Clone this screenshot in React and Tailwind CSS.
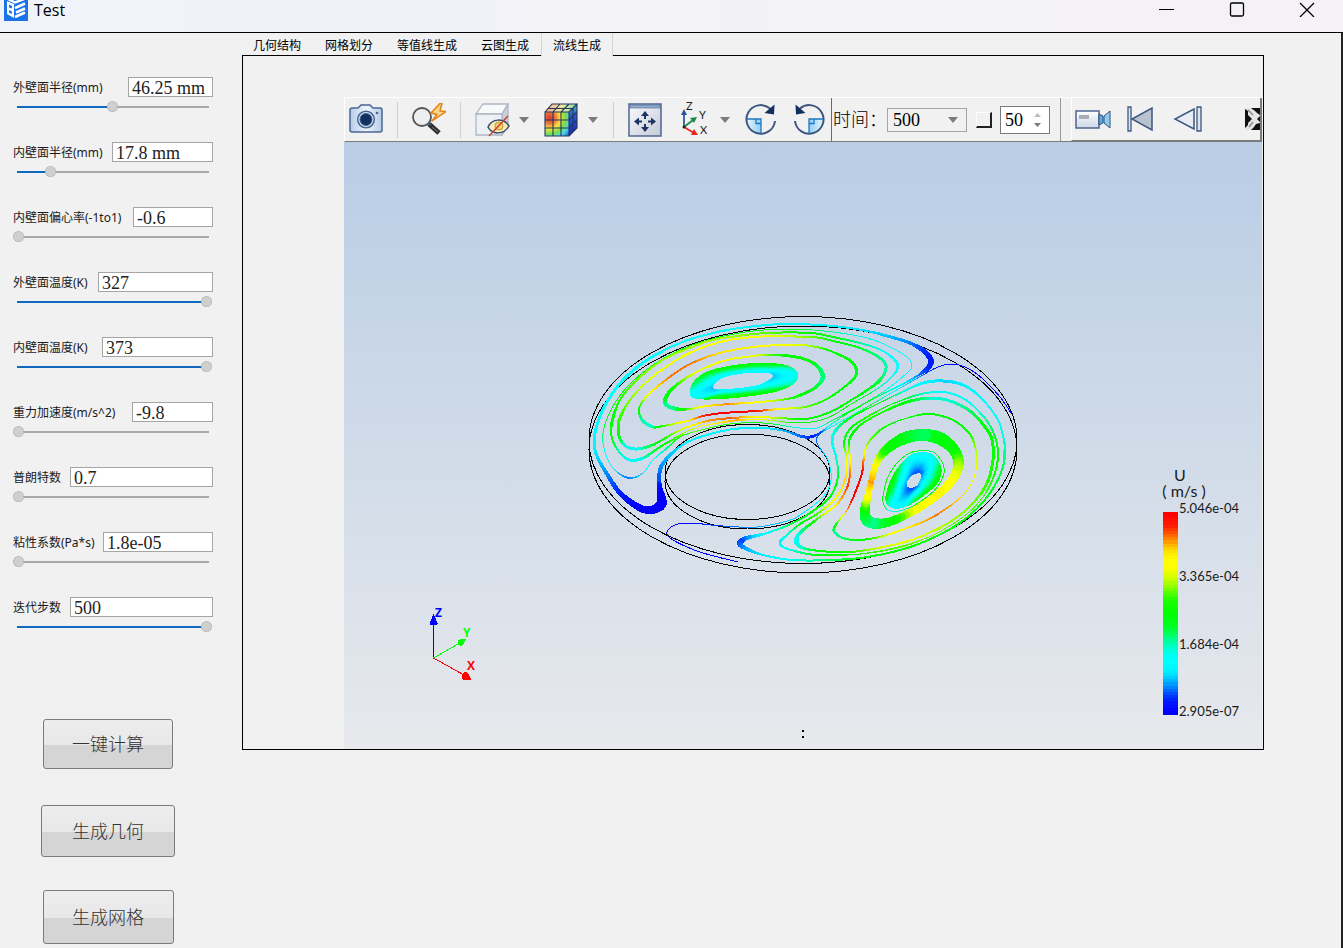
import { useState } from "react";

const fields = [
  { id: "outer-r", label: "外壁面半径(mm)", value: "46.25 mm", width: "w-[85px]", pos: 50 },
  { id: "inner-r", label: "内壁面半径(mm)", value: "17.8 mm", width: "w-[101px]", pos: 17 },
  { id: "ecc", label: "内壁面偏心率(-1to1)", value: "-0.6", width: "w-[80px]", pos: 0 },
  { id: "outer-t", label: "外壁面温度(K)", value: "327", width: "w-[115px]", pos: 100 },
  { id: "inner-t", label: "内壁面温度(K)", value: "373", width: "w-[111px]", pos: 100 },
  { id: "gravity", label: "重力加速度(m/s^2)", value: "-9.8", width: "w-[81px]", pos: 0 },
  { id: "prandtl", label: "普朗特数", value: "0.7", width: "w-[143px]", pos: 0 },
  { id: "viscosity", label: "粘性系数(Pa*s)", value: "1.8e-05", width: "w-[110px]", pos: 0 },
  { id: "steps", label: "迭代步数", value: "500", width: "w-[143px]", pos: 100 },
];

const tabs = ["几何结构", "网格划分", "等值线生成", "云图生成", "流线生成"];

// 流线数据: [x, y, 速度(0-1), 线宽]
const closedLines = [
  [
    [659, 480, 0.1, 4], [660, 490, 0.04, 6], [662, 500, 0, 9], [660, 506, 0, 10], [650, 510, 0, 8], [638, 507, 0, 7],
    [620, 493, 0.05, 5], [607, 474, 0.12, 4], [597, 456, 0.18, 3], [594, 441, 0.22, 3], [598, 422, 0.24, 3], [607, 402, 0.25, 3],
    [623, 380, 0.25, 3], [647, 360, 0.25, 3], [680, 343, 0.25, 2], [713, 333, 0.25, 2], [747, 327, 0.25, 2], [787, 324, 0.22, 2],
    [833, 326, 0.22, 2], [867, 331, 0.19, 2], [887, 336, 0.17, 3], [910, 343, 0.13, 3], [925, 352, 0.08, 5], [931, 361, 0.05, 6],
    [927, 369, 0.06, 5], [917, 376, 0.12, 2], [903, 384, 0.2, 2], [877, 397, 0.4, 1], [850, 412, 0.5, 1], [833, 423, 0.35, 1],
    [820, 433, 0.1, 2], [810, 437, 0.06, 3], [800, 436, 0.1, 3], [785, 431, 0.15, 2], [765, 428, 0.2, 2], [747, 428, 0.21, 2],
    [727, 430, 0.22, 2], [700, 437, 0.22, 2], [684, 444, 0.21, 2], [670, 455, 0.17, 3], [661, 467, 0.14, 4],
  ],
  [
    [603, 443, 0.35, 1], [608, 460, 0.25, 1], [617, 472, 0.17, 1], [630, 478, 0.12, 2], [643, 473, 0.18, 1], [653, 460, 0.25, 1],
    [667, 448, 0.35, 2], [680, 437, 0.5, 1], [697, 431, 0.6, 1], [730, 424, 0.55, 1], [763, 423, 0.5, 1], [800, 428, 0.3, 1],
    [817, 428, 0.25, 1], [833, 420, 0.4, 1], [867, 402, 0.45, 1], [890, 387, 0.3, 1], [907, 373, 0.23, 1], [912, 366, 0.22, 1],
    [907, 357, 0.24, 1], [890, 347, 0.25, 1], [867, 338, 0.28, 1], [833, 332, 0.35, 1], [793, 329, 0.45, 1], [753, 331, 0.5, 1],
    [720, 337, 0.5, 1], [687, 347, 0.5, 1], [653, 365, 0.5, 1], [627, 387, 0.5, 1], [612, 408, 0.48, 1], [604, 428, 0.43, 1],
  ],
  [
    [612, 438, 0.48, 2], [620, 453, 0.35, 2], [630, 460, 0.28, 3], [643, 458, 0.3, 3], [660, 447, 0.45, 2], [672, 440, 0.55, 2],
    [690, 430, 0.65, 1], [707, 425, 0.75, 1], [740, 420, 0.85, 2], [767, 420, 0.7, 1], [800, 423, 0.5, 1], [827, 418, 0.5, 1],
    [853, 403, 0.5, 1], [880, 387, 0.35, 1], [895, 373, 0.27, 2], [897, 363, 0.25, 3], [883, 351, 0.28, 2], [860, 343, 0.35, 2],
    [833, 337, 0.45, 2], [810, 333, 0.5, 2], [767, 333, 0.6, 2], [723, 338, 0.65, 2], [697, 345, 0.65, 2], [663, 360, 0.65, 2],
    [637, 380, 0.62, 2], [620, 400, 0.57, 2], [612, 422, 0.5, 3],
  ],
  [
    [618, 428, 0.55, 3], [620, 439, 0.45, 3], [627, 447, 0.3, 3], [637, 449, 0.27, 3], [650, 446, 0.4, 3], [662, 440, 0.5, 2],
    [680, 430, 0.65, 2], [707, 421, 0.85, 2], [733, 418, 0.9, 2], [753, 417, 0.8, 2], [780, 418, 0.65, 2], [806, 419, 0.5, 2],
    [830, 412, 0.5, 2], [853, 399, 0.5, 2], [878, 382, 0.43, 3], [886, 368, 0.35, 3], [880, 358, 0.36, 3], [860, 348, 0.42, 2],
    [833, 341, 0.5, 2], [810, 337, 0.6, 2], [753, 337, 0.73, 2], [713, 344, 0.75, 2], [680, 358, 0.72, 2], [650, 379, 0.7, 2],
    [630, 400, 0.63, 2], [620, 418, 0.58, 3],
  ],
  [
    [639, 412, 0.5, 2], [643, 421, 0.35, 3], [653, 427, 0.33, 3], [663, 426, 0.55, 2], [687, 421, 0.75, 2], [703, 416, 0.92, 2],
    [723, 413, 1, 2], [757, 411, 0.97, 2], [780, 409, 0.78, 2], [805, 407, 0.62, 2], [825, 400, 0.55, 2], [843, 388, 0.5, 2],
    [856, 375, 0.45, 3], [852, 362, 0.48, 3], [833, 352, 0.5, 2], [817, 347, 0.6, 2], [800, 345, 0.68, 2], [780, 345, 0.72, 2],
    [753, 347, 0.78, 2], [720, 353, 0.8, 2], [690, 364, 0.88, 2], [667, 379, 0.88, 2], [650, 393, 0.78, 2], [641, 404, 0.6, 2],
  ],
  [
    [665, 400, 0.45, 4], [668, 406, 0.35, 4], [677, 409, 0.38, 4], [690, 409, 0.6, 2], [707, 406, 0.78, 2], [730, 404, 0.87, 2],
    [760, 402, 0.75, 2], [787, 399, 0.6, 2], [803, 394, 0.5, 3], [816, 387, 0.44, 3], [823, 377, 0.37, 5], [818, 367, 0.4, 4],
    [807, 360, 0.47, 3], [790, 356, 0.5, 3], [770, 355, 0.58, 2], [753, 356, 0.7, 2], [723, 361, 0.73, 2], [693, 374, 0.7, 2],
    [673, 388, 0.55, 3],
  ],
  [
    [925, 435, 0.4, 12], [943, 440, 0.46, 13], [956, 453, 0.5, 11], [958, 468, 0.64, 10], [949, 484, 0.73, 9], [932, 499, 0.78, 8],
    [910, 513, 0.72, 8], [885, 523, 0.47, 9], [868, 521, 0.36, 12], [865, 510, 0.44, 10], [868, 495, 0.72, 7], [872, 478, 0.86, 6],
    [877, 462, 0.76, 7], [887, 449, 0.56, 9], [905, 438, 0.47, 12],
  ],
  [
    [862, 473, 1, 2], [864, 457, 0.85, 2], [868, 443, 0.64, 2], [883, 428, 0.55, 2], [907, 418, 0.5, 1], [930, 414, 0.5, 2],
    [953, 420, 0.5, 2], [968, 432, 0.52, 2], [974, 443, 0.6, 2], [977, 460, 0.68, 1], [973, 480, 0.75, 1], [960, 498, 0.82, 1],
    [933, 517, 0.88, 2], [907, 528, 0.8, 2], [883, 536, 0.68, 2], [860, 540, 0.5, 2], [843, 538, 0.4, 2], [834, 531, 0.35, 3],
    [837, 523, 0.5, 2], [847, 510, 0.85, 1], [855, 493, 1, 2],
  ],
  [
    [849, 443, 0.5, 2], [850, 460, 0.75, 2], [850, 473, 0.87, 2], [847, 488, 0.92, 2], [837, 504, 0.83, 2], [820, 517, 0.65, 2],
    [803, 530, 0.4, 3], [797, 537, 0.3, 4], [797, 543, 0.28, 5], [803, 548, 0.32, 3], [820, 551, 0.45, 2], [850, 552, 0.55, 2],
    [883, 547, 0.68, 2], [917, 538, 0.7, 2], [950, 522, 0.65, 2], [973, 503, 0.62, 2], [987, 483, 0.58, 3], [993, 460, 0.54, 3],
    [992, 440, 0.5, 3], [985, 427, 0.48, 3], [970, 411, 0.4, 3], [950, 401, 0.33, 3], [930, 398, 0.32, 3], [907, 402, 0.45, 3],
    [883, 412, 0.55, 2], [863, 423, 0.56, 2], [853, 433, 0.5, 3],
  ],
  [
    [844, 443, 0.5, 2], [847, 460, 0.7, 2], [845, 480, 0.82, 2], [835, 499, 0.78, 2], [817, 514, 0.6, 2], [800, 524, 0.48, 2],
    [787, 535, 0.33, 2], [780, 542, 0.2, 3], [785, 548, 0.24, 2], [808, 554, 0.4, 2], [825, 555, 0.48, 2], [860, 554, 0.55, 1],
    [900, 547, 0.6, 2], [933, 535, 0.62, 1], [963, 517, 0.6, 1], [983, 497, 0.58, 1], [995, 473, 0.55, 2], [998, 453, 0.5, 2],
    [995, 437, 0.44, 2], [987, 421, 0.37, 2], [970, 403, 0.3, 2], [953, 394, 0.27, 2], [937, 392, 0.26, 2], [917, 395, 0.35, 2],
    [890, 405, 0.5, 1], [867, 417, 0.57, 2], [850, 429, 0.5, 2],
  ],
  [
    [832, 441, 0.28, 3], [836, 457, 0.3, 2], [838, 477, 0.42, 2], [830, 497, 0.5, 2], [813, 511, 0.5, 2], [793, 523, 0.45, 2],
    [767, 533, 0.28, 2], [747, 538, 0.15, 4], [740, 543, 0.08, 6], [745, 548, 0.13, 4], [763, 555, 0.2, 2], [793, 560, 0.28, 2],
    [833, 560, 0.4, 2], [867, 557, 0.47, 2], [907, 548, 0.5, 2], [943, 533, 0.48, 2], [970, 515, 0.47, 2], [990, 493, 0.45, 2],
    [1002, 470, 0.41, 2], [1005, 450, 0.36, 3], [1003, 436, 0.32, 2], [997, 418, 0.28, 2], [980, 397, 0.24, 2], [963, 385, 0.22, 3],
    [943, 381, 0.18, 3], [923, 383, 0.22, 3], [900, 393, 0.32, 2], [873, 406, 0.5, 1], [850, 418, 0.5, 2], [836, 430, 0.34, 3],
  ],
  [
    [918, 451, 0.45, 1], [933, 452, 0.4, 1], [942, 462, 0.5, 1], [944, 473, 0.5, 1], [938, 486, 0.5, 1], [928, 496, 0.5, 1],
    [913, 506, 0.45, 1], [899, 511, 0.35, 1], [888, 510, 0.3, 1], [883, 502, 0.5, 1], [884, 491, 0.5, 1], [888, 477, 0.55, 1],
    [897, 463, 0.5, 1], [908, 454, 0.5, 1],
  ],
];

const openLines = [
  [
    [1011, 413, 0.01, 1], [1000, 397, 0.01, 1], [983, 379, 0.01, 1], [967, 368, 0.01, 1], [952, 364, 0.02, 1], [938, 367, 0.04, 1],
    [923, 375, 0.1, 1], [900, 388, 0.2, 1], [867, 407, 0.42, 1], [833, 426, 0.25, 1], [818, 436, 0.12, 1], [818, 445, 0.1, 1],
    [828, 460, 0.2, 1], [831, 480, 0.25, 1], [823, 497, 0.25, 1], [800, 515, 0.2, 1], [787, 521, 0.18, 1], [757, 527, 0.15, 1],
    [723, 526, 0.1, 1], [690, 523, 0.03, 1], [675, 525, 0.01, 1], [667, 532, 0, 1], [673, 540, 0, 1], [700, 552, 0, 1], [738, 562, 0, 1],
  ],
];

// 两个涡核, 外圈到内圈插值
const cores = [
  {
    outer: [
      [691, 393, 0.27], [696, 381, 0.42], [713, 371, 0.5], [747, 365, 0.52], [777, 365, 0.5], [792, 369, 0.38],
      [797, 376, 0.28], [791, 384, 0.35], [773, 391, 0.5], [740, 396, 0.55], [710, 398, 0.52], [695, 397, 0.3],
    ],
    inner: [
      [712, 387, 0.17], [716, 381, 0.22], [725, 376, 0.25], [747, 372, 0.27], [766, 372, 0.24], [773, 374, 0.19],
      [773, 378, 0.17], [767, 382, 0.2], [758, 386, 0.26], [740, 389, 0.27], [722, 390, 0.25], [715, 390, 0.18],
    ],
  },
  {
    outer: [
      [918, 454, 0.27], [931, 455, 0.28], [938, 463, 0.35], [940, 472, 0.48], [936, 483, 0.52], [926, 492, 0.52],
      [912, 502, 0.45], [900, 507, 0.27], [891, 506, 0.26], [887, 501, 0.38], [888, 492, 0.52], [893, 478, 0.52],
      [901, 466, 0.42], [910, 457, 0.3],
    ],
    inner: [
      [916, 473, 0.1], [919, 472, 0.1], [922, 474, 0.12], [922, 478, 0.16], [920, 482, 0.18], [918, 486, 0.17],
      [914, 488, 0.12], [911, 489, 0.1], [908, 488, 0.1], [906, 487, 0.12], [906, 483, 0.15], [907, 480, 0.17],
      [910, 476, 0.15], [913, 474, 0.12],
    ],
  },
];

const coreLines = cores.flatMap(({ outer, inner }) =>
  Array.from({ length: 17 }, (_, k) => {
    const f = k / 16;
    return outer.map((p, i) => [
      p[0] + (inner[i][0] - p[0]) * f,
      p[1] + (inner[i][1] - p[1]) * f,
      p[2] + (inner[i][2] - p[2]) * f,
      3 - f,
    ]);
  })
);

function speedColor(t) {
  const v = Math.max(0, Math.min(1, t));
  const hue = 240 * (1 - v) + 7 * Math.sin(v * Math.PI * 8);
  return `hsl(${Math.max(0, Math.min(240, hue)).toFixed(0)} 100% 50%)`;
}

function spline(a, b, c, d, u) {
  return 0.5 * (2 * b + (c - a) * u + (2 * a - 5 * b + 4 * c - d) * u * u + (3 * b - a - 3 * c + d) * u * u * u);
}

function StreamLine({ points, closed }) {
  const n = points.length;
  const at = (i) => (closed ? points[(i + n) % n] : points[Math.max(0, Math.min(n - 1, i))]);
  const samples = [];
  const steps = 6;
  const count = closed ? n : n - 1;
  for (let i = 0; i < count; i++) {
    for (let s = 0; s < steps; s++) {
      const u = s / steps;
      const [a, b, c, d] = [at(i - 1), at(i), at(i + 1), at(i + 2)];
      samples.push([
        spline(a[0], b[0], c[0], d[0], u),
        spline(a[1], b[1], c[1], d[1], u),
        b[2] + (c[2] - b[2]) * u,
        b[3] + (c[3] - b[3]) * u,
      ]);
    }
  }
  samples.push(at(count));

  return (
    <g strokeLinecap="round">
      {samples.slice(1).map((p, i) => (
        <line
          key={i}
          x1={samples[i][0].toFixed(1)}
          y1={samples[i][1].toFixed(1)}
          x2={p[0].toFixed(1)}
          y2={p[1].toFixed(1)}
          stroke={speedColor(p[2])}
          strokeWidth={p[3].toFixed(1)}
        />
      ))}
    </g>
  );
}

function Legend() {
  const bands = 64;
  const h = 202 / bands;
  return (
    <g fontFamily="Lato, sans-serif" fill="#1a1a1a">
      <text textAnchor="middle" fontSize="16">
        <tspan x="1180" y="481">U</tspan>
        <tspan x="1184" y="497">( m/s )</tspan>
      </text>
      <g shapeRendering="crispEdges">
        {Array.from({ length: bands }, (_, i) => (
          <rect key={i} x="1163" y={512 + i * h} width="15" height={h + 0.5} fill={speedColor(1 - i / (bands - 1))} />
        ))}
      </g>
      <g fontSize="13">
        <text x="1179" y="513">5.046e-04</text>
        <text x="1179" y="581">3.365e-04</text>
        <text x="1179" y="649">1.684e-04</text>
        <text x="1179" y="716">2.905e-07</text>
      </g>
    </g>
  );
}

function Triad() {
  return (
    <g fontFamily="'Open Sans', sans-serif" fontWeight="700" fontSize="12">
      <g shapeRendering="crispEdges">
        <path d="M433.5 658V624" stroke="#00f" />
        <path d="M433.5 658L458 644" stroke="#0f0" />
        <path d="M433.5 658L464 675" stroke="#f00" />
        <path d="M433.5 614L438 624Q434 627 429.500 624Z" fill="#00f" />
        <path d="M466 639.500L462 646Q457 646 457.500 641Q460 638 466 639.500Z" fill="#0f0" />
        <path d="M471.500 680H463Q461 677 463 673.500Q465 671 468 673Z" fill="#f00" />
      </g>
      <text x="435" y="617" fill="#00f">Z</text>
      <text x="463" y="637" fill="#0f0">Y</text>
      <text x="467" y="670" fill="#f00">X</text>
    </g>
  );
}

function FlowView() {
  return (
    <div className="bg-linear-to-b from-[#b9cde5] to-[#e7e9ec]">
      <svg viewBox="344 142 918 607" className="block h-[607px] w-full" role="img" aria-label="流线">
        <g shapeRendering="crispEdges">
          <g fill="none" stroke="#000">
            <ellipse cx="803" cy="440" rx="214" ry="123.500" />
            <ellipse cx="803" cy="449.500" rx="214" ry="123.500" />
            <ellipse cx="747.500" cy="472" rx="82.500" ry="47.500" />
            <ellipse cx="747.500" cy="481.500" rx="82.500" ry="47.500" />
          </g>
          {openLines.map((pts, i) => <StreamLine key={i} points={pts} />)}
          {closedLines.map((pts, i) => <StreamLine key={i} points={pts} closed />)}
          {coreLines.map((pts, i) => <StreamLine key={i} points={pts} closed />)}
        </g>
        <Triad />
        <Legend />
        <path d="M802 730h2v2h-2zM802 736h2v2h-2z" fill="#000" />
      </svg>
    </div>
  );
}

function CameraIcon() {
  return (
    <svg width="34" height="34" viewBox="0 0 34 34">
      <defs>
        <linearGradient id="cam" x2="1"><stop stopColor="#b5cde8" /><stop offset=".5" stopColor="#eef5fc" /><stop offset="1" stopColor="#b5cde8" /></linearGradient>
      </defs>
      <path d="M3 5H9L12 2H21L24 5H31Q33 5 33 7V27Q33 29 31 29H3Q1 29 1 27V7Q1 5 3 5Z" fill="url(#cam)" stroke="#4c6690" strokeWidth="1.500" />
      <circle cx="17" cy="16.500" r="8.300" fill="#dce9f6" stroke="#4c6690" strokeWidth="1.500" />
      <circle cx="17" cy="16.500" r="6" fill="#14305f" stroke="#35609a" />
      <circle cx="28" cy="10" r="1.300" fill="#4c6690" />
    </svg>
  );
}

function ZoomFlashIcon() {
  return (
    <svg width="34" height="34" viewBox="0 0 34 34">
      <path d="M17 21L27 30" stroke="#2b2b2b" strokeWidth="5" />
      <path d="M16 19.500L19 22.500" stroke="#35607f" strokeWidth="2" />
      <path d="M20 24L26 29" stroke="#666" strokeWidth="1.200" />
      <circle cx="10" cy="14" r="9" fill="#eceef1" stroke="#555" strokeWidth="1.800" />
      <path d="M28 0.500L19 10L25 11.500L20 18L34 8.500L28 8L30 0.500Z" fill="#fbd48b" stroke="#e08214" strokeWidth="1.500" strokeLinejoin="round" />
    </svg>
  );
}

function HiddenBoxIcon() {
  return (
    <svg width="35" height="34" viewBox="0 0 35 34">
      <path d="M1 11L8 1H33L27 11Z" fill="#f7f9fb" stroke="#aeb7c4" strokeWidth="1.300" />
      <path d="M27 11L33 1V23L27 32Z" fill="#c9ced8" stroke="#aeb7c4" strokeWidth="1.300" />
      <path d="M1 11H27V32H1Z" fill="#edf0f4" stroke="#aeb7c4" strokeWidth="1.300" />
      <path d="M13 24C17 15 29 15 34 23C29 32 17 32 13 24Z" fill="#fbe9ac" stroke="#334c74" strokeWidth="1.500" />
      <circle cx="24" cy="23" r="4" fill="#f3cf79" stroke="#b99642" />
      <path d="M14 33L33 13" stroke="#c9472b" strokeWidth="1.600" />
    </svg>
  );
}

function ColorCubeIcon() {
  return (
    <svg width="34" height="34" viewBox="0 0 34 34">
      <defs>
        <radialGradient id="cube" cx="0.200" cy="0.250" r="1.050">
          <stop stopColor="#d9392e" /><stop offset=".2" stopColor="#ec6b3a" /><stop offset=".42" stopColor="#f5e43f" />
          <stop offset=".62" stopColor="#7bdd4b" /><stop offset=".8" stopColor="#4fd8ea" /><stop offset="1" stopColor="#2767dd" />
        </radialGradient>
        <linearGradient id="cubeTop" x2="1"><stop stopColor="#efa392" /><stop offset=".5" stopColor="#f0e9a2" /><stop offset="1" stopColor="#86dcc0" /></linearGradient>
        <linearGradient id="cubeSide" y2="1" x2="0"><stop stopColor="#4fc3a5" /><stop offset=".35" stopColor="#2a5bd0" /><stop offset="1" stopColor="#1227b5" /></linearGradient>
      </defs>
      <path d="M1 9L8 1H33L25 9Z" fill="url(#cubeTop)" />
      <path d="M25 9L33 1V25L25 33Z" fill="url(#cubeSide)" />
      <path d="M1 9H25V33H1Z" fill="url(#cube)" />
      <path d="M1 9H25V33H1ZM1 17H25L33 9M1 25H25L33 17M9 33V9L16 1M17 33V9L25 1M1 9L8 1H33L25 9M33 1V25L25 33M4 5.500H29V29" fill="none" stroke="#26365a" strokeWidth="1.100" />
    </svg>
  );
}

function FitIcon() {
  return (
    <svg width="34" height="34" viewBox="0 0 34 34">
      <defs><linearGradient id="fit" x2="1" y2="1"><stop stopColor="#fafbfd" /><stop offset="1" stopColor="#c3c9d8" /></linearGradient></defs>
      <path d="M1 1H33V33H1Z" fill="url(#fit)" stroke="#4c6690" strokeWidth="1.500" />
      <path d="M2 2H32V5H2Z" fill="#8fabd0" stroke="#4c6690" strokeWidth=".6" />
      <g fill="#1c3461">
        <path d="M17 8L21 13H13ZM17 29L21 24H13ZM6 18.500L11 14.500V22.500ZM28 18.500L23 14.500V22.500Z" />
        <path d="M16 12h2v4h-2zM16 21h2v4h-2zM10 17.500h4v2h-4zM20 17.500h4v2h-4z" />
      </g>
    </svg>
  );
}

function AxesIcon() {
  return (
    <svg width="30" height="42" viewBox="0 -2 30 42" fontFamily="Lato, sans-serif" fontSize="11">
      <path d="M4 26V13" stroke="#2c4f9e" strokeWidth="1.700" />
      <path d="M4 8L7 14H1Z" fill="#2c4f9e" />
      <path d="M4 26L13 19" stroke="#1b8a43" strokeWidth="1.700" />
      <path d="M17 16L14 22L10 17Z" fill="#1b8a43" />
      <path d="M4 26L14 32" stroke="#e8261d" strokeWidth="1.700" />
      <path d="M18 34L11 34L14 28Z" fill="#e8261d" />
      <circle cx="4" cy="26" r="1.500" fill="#222" />
      <text x="6" y="9" fill="#222">Z</text>
      <text x="19" y="18" fill="#222">Y</text>
      <text x="20" y="33" fill="#222">X</text>
    </svg>
  );
}

function RotateIcon({ back }) {
  return (
    <svg width="32" height="34" viewBox="0 0 32 34">
      <defs><linearGradient id="rot"><stop stopColor="#e6f4fd" /><stop offset="1" stopColor="#8fcdf2" /></linearGradient></defs>
      <g transform={back ? "matrix(-1 0 0 1 32 0)" : undefined}>
        <path d="M2 16A14 14 0 0 0 16 30V16Z" fill="url(#rot)" />
        <path d="M30 18A14.300 14.300 0 1 1 25 5.500" fill="none" stroke="#3d5780" strokeWidth="2" />
        <path d="M2 16H16V30M11 16V20.500H16" fill="none" stroke="#1c78c0" strokeWidth="1.300" />
        <path d="M29.500 1.500L29 11.500L19.500 10Z" fill="#14305f" />
      </g>
    </svg>
  );
}

function VideoIcon() {
  return (
    <svg width="36" height="24" viewBox="0 0 36 24">
      <defs><linearGradient id="vid" y2="1" x2="0"><stop stopColor="#fff" /><stop offset="1" stopColor="#cbd6e6" /></linearGradient></defs>
      <path d="M1 4H24V21H1Z" fill="url(#vid)" stroke="#4c6690" strokeWidth="1.500" />
      <path d="M4 8H14V12H4Z" fill="#a7adb8" />
      <path d="M24 7L28 9V16L24 18Z" fill="#5fa9dc" stroke="#35507c" />
      <path d="M35 4V21L29 16V9Z" fill="#8cccef" stroke="#35507c" />
    </svg>
  );
}

function FirstIcon() {
  return (
    <svg width="26" height="26" viewBox="0 0 26 26">
      <path d="M1 1H4V25H1Z" fill="#dfe5ee" stroke="#3d5780" strokeWidth="1.300" />
      <path d="M25 2V24L5 13Z" fill="#b9c2cf" stroke="#3d5780" strokeWidth="1.500" />
    </svg>
  );
}

function StepBackIcon() {
  return (
    <svg width="30" height="26" viewBox="0 0 30 26">
      <path d="M21 3V23L2 13Z" fill="#e8ecf3" stroke="#3d5780" strokeWidth="1.500" />
      <path d="M24 1H28V25H24Z" fill="#dfe5ee" stroke="#3d5780" strokeWidth="1.300" />
    </svg>
  );
}

function MoreIcon() {
  return (
    <svg width="15" height="22" viewBox="0 0 15 22">
      <path d="M0 0H15V22H0Z" fill="#e4e4e4" />
      <path d="M0 1L3 3L3 7L7 11L3 15V17L0 20Z" fill="#111" />
      <path d="M6 0H15V7L12 5L10 3Z" fill="#111" />
      <path d="M15 8V14L12 11ZM15 15V22H6L9 19L11 16Z" fill="#111" />
      <path d="M3 2L8 7M8 14L4 19" stroke="#8d8d8d" strokeWidth="1.500" />
    </svg>
  );
}

function Caret() {
  return (
    <svg width="10" height="6" viewBox="0 0 10 6" className="shrink-0">
      <path d="M0 0H10L5 6Z" fill="#7b7b7b" />
    </svg>
  );
}

function Divider() {
  return <span className="h-9 w-px shrink-0 bg-[#cfcfcf]" />;
}

function ToolBar() {
  const [time, setTime] = useState("500");
  return (
    <div className="flex h-[45px] w-full border-t border-b border-l border-t-white border-b-[#7b7b7b] border-l-white bg-[#f1f1f1]">
      <div className="flex items-center gap-[14px] border-r border-[#6b6b6b] pr-[6px] pl-1">
        <button aria-label="截图"><CameraIcon /></button>
        <Divider />
        <button aria-label="快速缩放"><ZoomFlashIcon /></button>
        <Divider />
        <div className="flex items-center gap-[9px]">
          <button aria-label="隐藏"><HiddenBoxIcon /></button>
          <button aria-label="隐藏选项"><Caret /></button>
        </div>
        <div className="flex items-center gap-[10px] px-px">
          <button aria-label="着色"><ColorCubeIcon /></button>
          <button aria-label="着色选项"><Caret /></button>
        </div>
        <Divider />
        <button aria-label="适应窗口"><FitIcon /></button>
        <div className="flex items-center gap-[10px] pr-px pl-1">
          <button aria-label="视图方向"><AxesIcon /></button>
          <button aria-label="方向选项"><Caret /></button>
        </div>
        <div className="flex items-center gap-4">
          <button aria-label="顺时针旋转"><RotateIcon /></button>
          <button aria-label="逆时针旋转"><RotateIcon back /></button>
        </div>
      </div>

      <div className="flex items-center border-r border-[#9a9a9a] pr-[10px] pl-px font-['Liberation_Serif','Noto_Sans_CJK_SC',serif] text-lg">
        <label htmlFor="time" className="w-[54px] font-light whitespace-nowrap">时间：</label>
        <div className="relative">
          <select
            id="time"
            value={time}
            onChange={(e) => setTime(e.target.value)}
            className="block h-6 w-20 appearance-none border border-[#a5a5a5] bg-[#f1f1f1] pl-[5px] leading-5"
          >
            <option>500</option>
          </select>
          <span className="pointer-events-none absolute top-0 right-[9px] flex h-full items-center"><Caret /></span>
        </div>
        <input
          type="checkbox"
          aria-label="循环"
          className="ml-[9px] size-4 appearance-none border-t border-r-2 border-b-2 border-l border-t-white border-r-[#222] border-b-[#222] border-l-white"
        />
        <div className="ml-2 flex h-7 w-[50px] items-center justify-between border border-[#7b7b7b] bg-white pr-2 pl-1">
          <input type="text" aria-label="帧" defaultValue="50" className="w-6 outline-none" />
          <div className="flex flex-col gap-[6px]">
            <button aria-label="增加" className="h-1">
              <svg width="7" height="4" className="block"><path d="M0 4H7L3.500 0Z" fill="#bdbdbd" /></svg>
            </button>
            <button aria-label="减少" className="h-1">
              <svg width="7" height="4" className="block"><path d="M0 0H7L3.500 4Z" fill="#7b7b7b" /></svg>
            </button>
          </div>
        </div>
      </div>

      <div className="ml-[10px] flex flex-1 items-center border-r-2 border-b border-l border-r-[#7b7b7b] border-b-[#7b7b7b] border-l-white pl-[3px]">
        <button aria-label="录制"><VideoIcon /></button>
        <button aria-label="第一帧" className="ml-4"><FirstIcon /></button>
        <button aria-label="上一帧" className="ml-5"><StepBackIcon /></button>
        <button aria-label="更多" className="ml-auto"><MoreIcon /></button>
      </div>
    </div>
  );
}

function Field({ field }) {
  const [pos, setPos] = useState(field.pos);
  return (
    <div>
      <div className="flex h-5 items-center justify-between">
        <label htmlFor={field.id} className="pt-[2px] text-xs whitespace-nowrap text-[#1a1a1a]">{field.label}</label>
        <input
          id={field.id}
          type="text"
          defaultValue={field.value}
          className={`${field.width} h-5 border border-[#a5a5a5] bg-white pt-[2px] pl-[3px] font-['Liberation_Serif',serif] text-lg leading-4 text-[#222] outline-none`}
        />
      </div>
      <input
        type="range"
        aria-label={field.label}
        value={pos}
        onChange={(e) => setPos(Number(e.target.value))}
        className="mt-1 block h-[11px] w-[199px] appearance-none bg-[length:calc(100%-7px)_2px] bg-center bg-no-repeat [&::-webkit-slider-thumb]:size-[11px] [&::-webkit-slider-thumb]:appearance-none [&::-webkit-slider-thumb]:rounded-full [&::-webkit-slider-thumb]:border [&::-webkit-slider-thumb]:border-dotted [&::-webkit-slider-thumb]:border-[#a5a5a5] [&::-webkit-slider-thumb]:bg-[#cfcfcf]"
        style={{ backgroundImage: `linear-gradient(to right, #0f69bd ${pos}%, #a9a9a9 ${pos}%)` }}
      />
    </div>
  );
}

function TitleBar() {
  return (
    <header className="flex h-[33px] items-start justify-between border-b border-black bg-linear-to-r from-[#f0f3f9] to-[#f5f2f5] pl-1">
      <div className="flex items-start gap-[6px]">
        <svg width="24" height="21" viewBox="0 0 24 21">
          <path d="M0 0H24V21H0Z" fill="#1a73e8" />
          <path d="M3 1V14L10 18V4Z" fill="#fff" />
          <path d="M5 4.500L8 6V8.500L5 7.500ZM5 10L8 11.500V14L5 12.500Z" fill="#1a73e8" />
          <path d="M4 -1L11 2.500L20 -1M11 8L21 3.500M12 12.500L21 8.500M11 17L21 12.500" fill="none" stroke="#fff" strokeWidth="2.500" />
        </svg>
        <h1 className="font-['Open_Sans',sans-serif] text-base leading-5">Test</h1>
      </div>
      <div className="flex gap-[54px] pt-px pr-[28px]">
        <button aria-label="最小化">
          <svg width="16" height="16" className="block"><path d="M0 8.500H15" stroke="#000" /></svg>
        </button>
        <button aria-label="最大化">
          <svg width="16" height="16" className="block"><rect x="1.500" y="2" width="13" height="13" rx="1.500" fill="none" stroke="#000" strokeWidth="1.300" /></svg>
        </button>
        <button aria-label="关闭">
          <svg width="16" height="16" className="block"><path d="M1 2L15 16M15 2L1 16" stroke="#000" strokeWidth="1.300" /></svg>
        </button>
      </div>
    </header>
  );
}

export default function App() {
  const [tab, setTab] = useState("流线生成");
  const actionStyle =
    "rounded-[3px] border border-[#7b7b7b] bg-linear-to-b from-[#ededed] from-0% via-[#e8e8e8] via-52% to-[#d5d5d5] to-52% text-lg font-light text-[#333]";

  return (
    <div className="flex min-h-screen flex-col bg-[#f1f1f1] font-['Noto_Sans','Noto_Sans_CJK_SC',sans-serif] text-black">
      <TitleBar />
      <div className="flex flex-1 items-stretch border-r-2 border-[#222]">
        {/* 参数设置 */}
        <aside className="w-[241px] shrink-0 pt-11">
          <div className="flex flex-col gap-[30px] pr-7 pl-[13px]">
            {fields.map((f) => <Field key={f.id} field={f} />)}
          </div>
          <div className="flex flex-col items-center pt-[87px] pr-[25px]">
            <button className={`${actionStyle} h-[50px] w-[130px]`}>一键计算</button>
            <button className={`${actionStyle} mt-9 h-[52px] w-[134px]`}>生成几何</button>
            <button className={`${actionStyle} mt-[33px] h-[54px] w-[131px]`}>生成网格</button>
          </div>
        </aside>

        {/* 结果显示 */}
        <main className="min-w-0 flex-1 pr-[77px]">
          <div role="tablist" className="flex h-[22px]">
            {tabs.map((t) => (
              <button
                key={t}
                role="tab"
                aria-selected={t === tab}
                onClick={() => setTab(t)}
                className={
                  t === tab
                    ? "relative h-[23px] border-x border-[#d5d5d5] bg-[#f1f1f1] px-[11px] pt-[2px] text-xs"
                    : "px-3 pt-[3px] text-xs"
                }
              >
                {t}
              </button>
            ))}
          </div>
          <section className="ml-px border border-black pt-[41px] pr-px pl-[101px]">
            <ToolBar />
            <FlowView />
          </section>
        </main>
      </div>
    </div>
  );
}
